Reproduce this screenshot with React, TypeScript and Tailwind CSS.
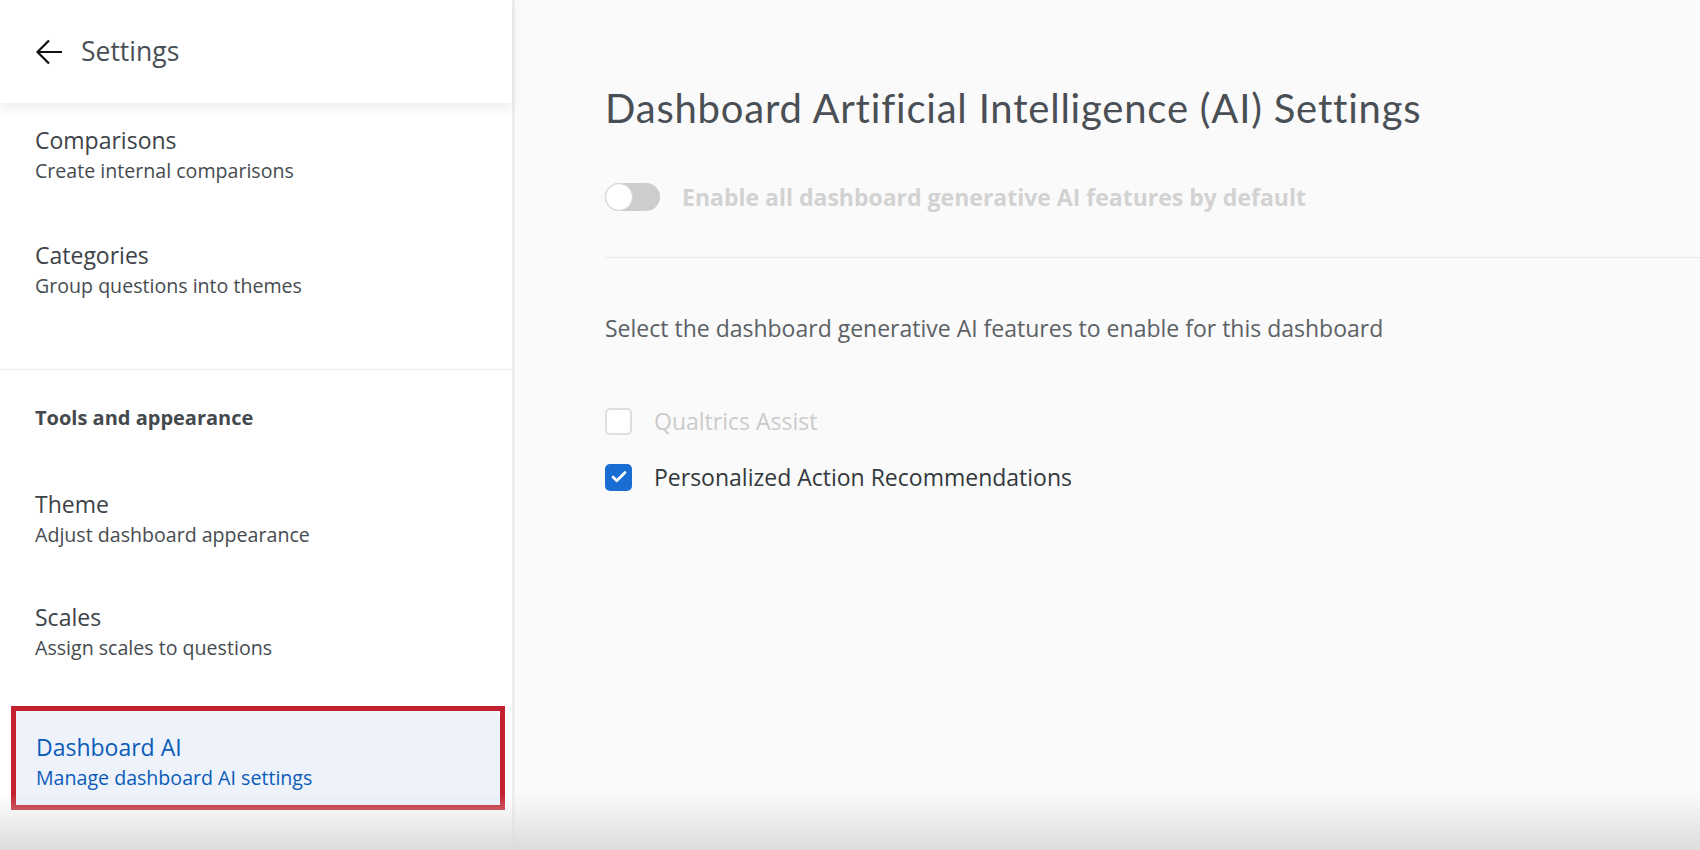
import { Check } from 'lucide-react'

const body = { fontFamily: '"Open Sans", Lato, sans-serif' }
const heading = { fontFamily: 'Lato, "Open Sans", sans-serif' }

type NavItem = { title: string; sub: string }

function NavEntry({ item, className }: { item: NavItem; className?: string }) {
  return (
    <div className={className}>
      <div className="text-[23px] leading-[30px] text-[#3d4247]">{item.title}</div>
      <div className="text-[19.6px] leading-[32px] text-[#464b50]">{item.sub}</div>
    </div>
  )
}

export default function App() {
  return (
    <div
      className="relative flex h-[850px] w-[1700px] overflow-hidden bg-[#fafafa]"
      style={body}
    >
      {/* sidebar */}
      <aside className="flex w-[515px] shrink-0 flex-col border-r-[3px] border-[#eeeeee] bg-white">
        <div className="relative z-10 flex h-[103px] items-center gap-[18px] bg-white pl-[35px] shadow-[0_5px_10px_rgba(0,0,0,0.07)]">
          <svg width="28" height="26" viewBox="0 0 28 26" fill="none">
            <path d="M27 13H2.5M14 1.5L2.5 13L14 24.5" stroke="#111" strokeWidth="2.2" />
          </svg>
          <span className="text-[26.5px] text-[#4a4f55]">Settings</span>
        </div>

        <div className="flex flex-col pl-[35px] pt-[22px]">
          <NavEntry item={{ title: 'Comparisons', sub: 'Create internal comparisons' }} />
          <NavEntry
            className="mt-[53px]"
            item={{ title: 'Categories', sub: 'Group questions into themes' }}
          />
        </div>

        <div className="mt-[67px] h-px bg-[#ededed]" />

        <div className="flex flex-col pl-[35px]">
          <div className="mt-[36px] text-[20px] font-bold leading-[24px] text-[#44494e]">
            Tools and appearance
          </div>
          <NavEntry
            className="mt-[59px]"
            item={{ title: 'Theme', sub: 'Adjust dashboard appearance' }}
          />
          <NavEntry
            className="mt-[51px]"
            item={{ title: 'Scales', sub: 'Assign scales to questions' }}
          />
        </div>

        <div className="ml-[11px] mt-[42px] w-[494px] border-[5px] border-[#c3212f]">
          <div className="rounded-tr-[6px] bg-[#edf2fb] pb-[11px] pl-[20px] pt-[21px]">
            <div className="text-[23px] leading-[30px] text-[#0b5cb8]">Dashboard AI</div>
            <div className="text-[19.6px] leading-[32px] text-[#0b5cb8]">
              Manage dashboard AI settings
            </div>
          </div>
        </div>
      </aside>

      {/* main */}
      <main className="flex flex-1 flex-col pl-[90px] pt-[84px]">
        <h1 className="text-[40px] leading-[48px] tracking-[0.8px] text-[#4a4f55]" style={heading}>
          Dashboard Artificial Intelligence (AI) Settings
        </h1>

        <div className="mt-[51px] flex items-center gap-[22px]">
          <div className="flex h-[28px] w-[55px] items-center rounded-full bg-[#cdcdcd]">
            <div className="h-[28px] w-[28px] rounded-full border border-[#d4d4d4] bg-white" />
          </div>
          <span className="text-[23px] font-bold leading-[28px] text-[#d2d2d2]">
            Enable all dashboard generative AI features by default
          </span>
        </div>

        <div className="mt-[46px] h-px bg-[#e8e8e8]" />

        <p className="mt-[55px] text-[23px] leading-[30px] text-[#5c6166]">
          Select the dashboard generative AI features to enable for this dashboard
        </p>

        <div className="mt-[64px] flex flex-col gap-[28px]">
          <label className="flex items-center gap-[22px]">
            <span className="h-[27px] w-[27px] rounded-[5px] border-2 border-[#dedede] bg-white" />
            <span className="text-[23px] leading-[28px] text-[#cbcbcb]">Qualtrics Assist</span>
          </label>
          <label className="flex items-center gap-[22px]">
            <span className="flex h-[27px] w-[27px] items-center justify-center rounded-[5px] bg-[#1a6dd3]">
              <Check size={18} strokeWidth={3.5} color="white" />
            </span>
            <span className="text-[23px] leading-[28px] text-[#33383d]">
              Personalized Action Recommendations
            </span>
          </label>
        </div>
      </main>

      {/* bottom fade of the window */}
      <div className="pointer-events-none absolute inset-x-0 bottom-0 h-[56px] bg-gradient-to-b from-transparent to-[#dcdcdc]" />
    </div>
  )
}
